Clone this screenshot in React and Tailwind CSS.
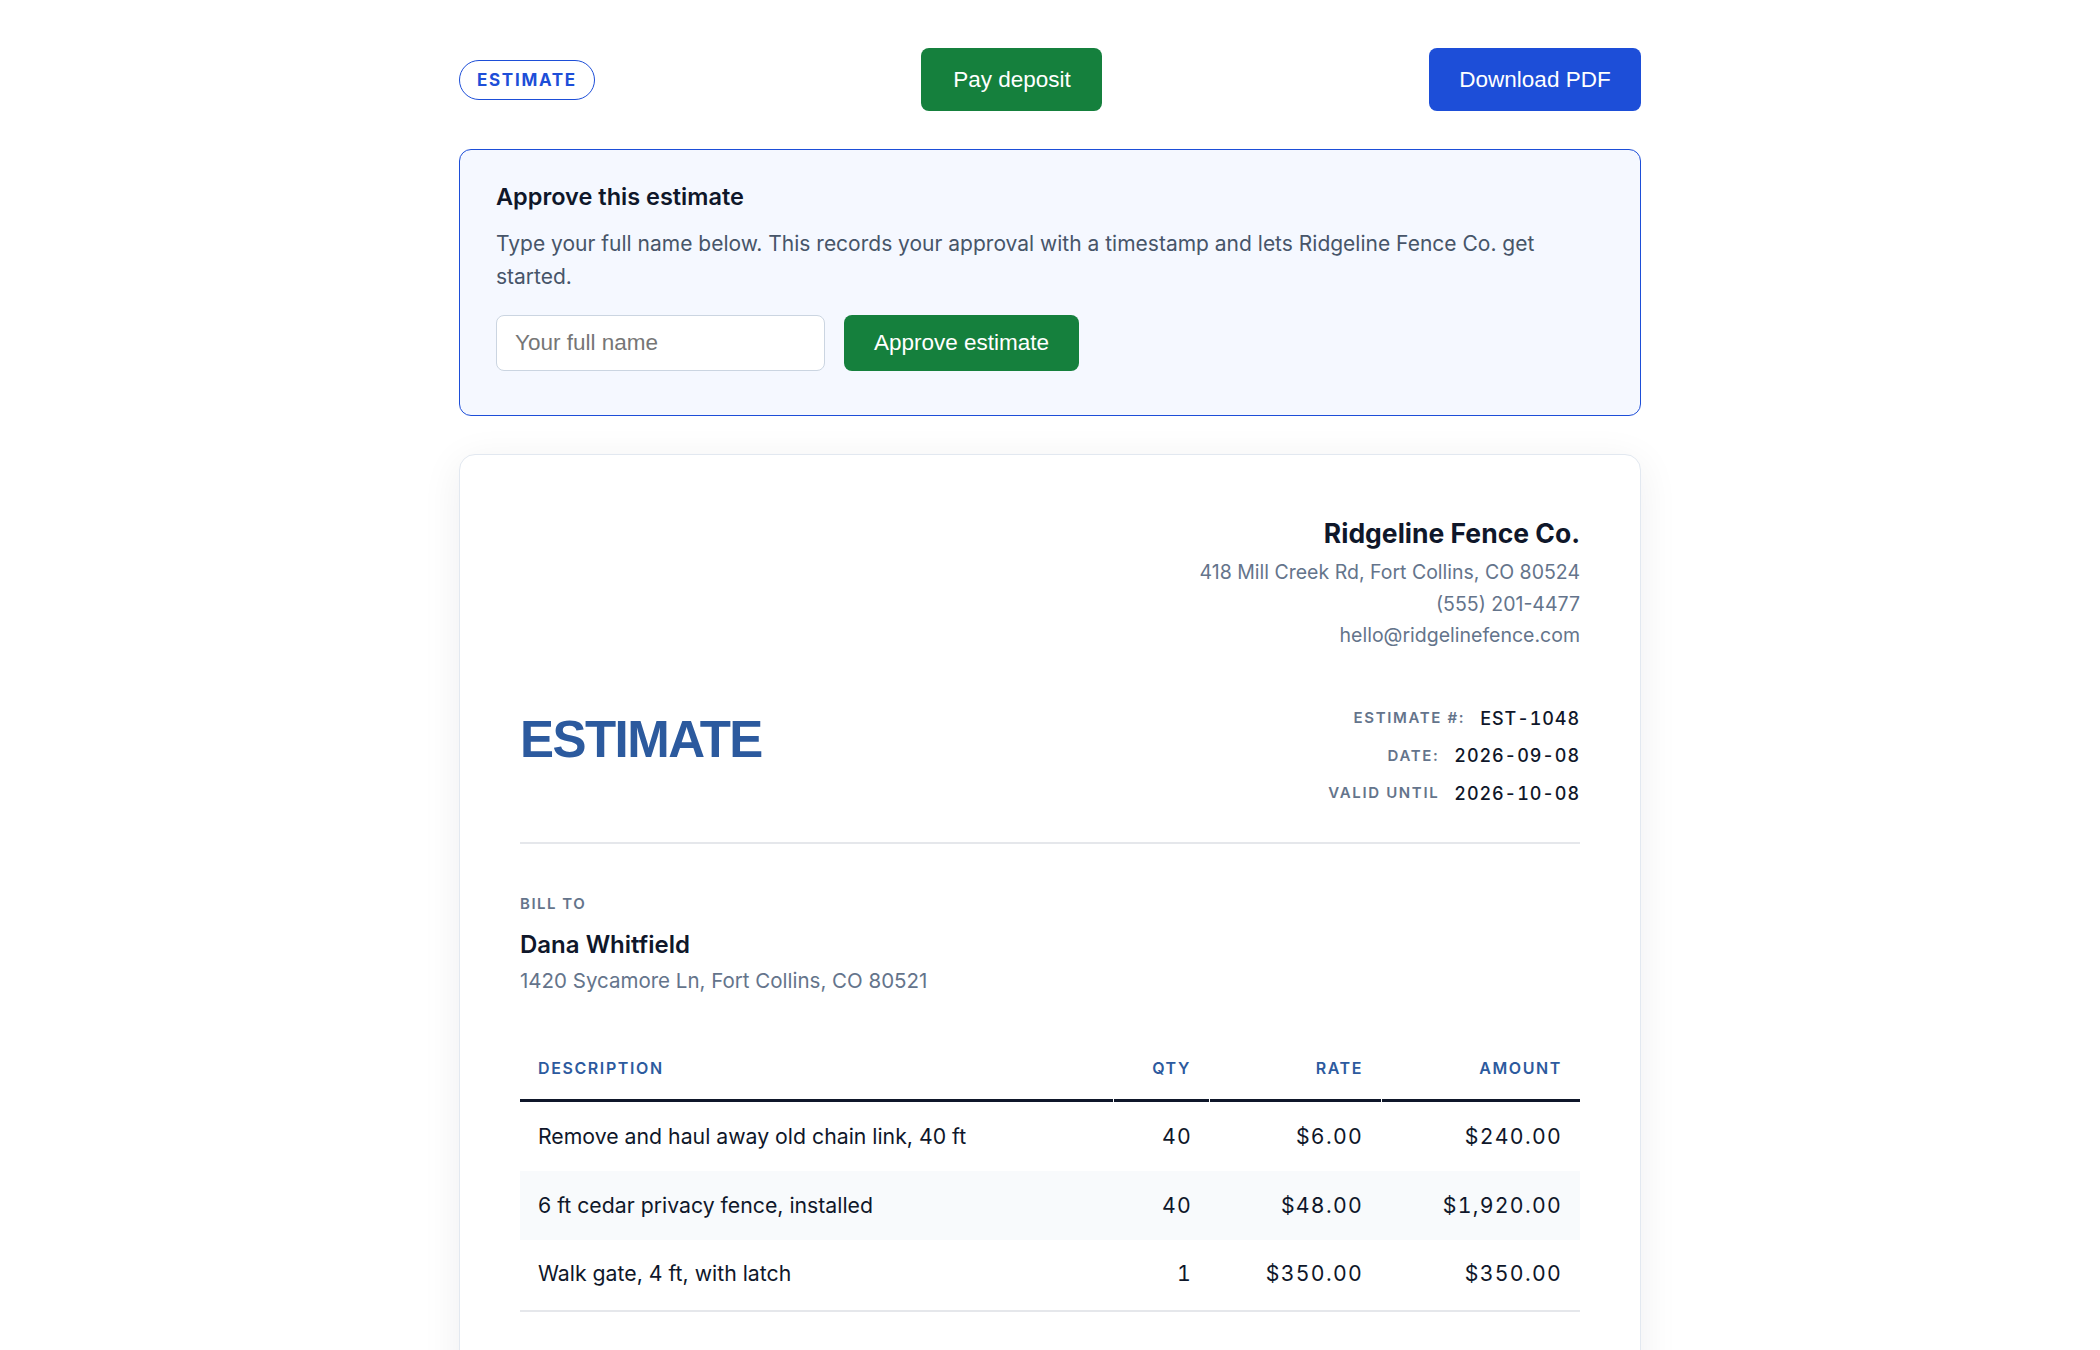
import React from "react";

const items = [
  { desc: "Remove and haul away old chain link, 40 ft", qty: "40", rate: "$6.00", amount: "$240.00" },
  { desc: "6 ft cedar privacy fence, installed", qty: "40", rate: "$48.00", amount: "$1,920.00" },
  { desc: "Walk gate, 4 ft, with latch", qty: "1", rate: "$350.00", amount: "$350.00" },
];

function MetaRow({ label, value }) {
  return (
    <div className="flex h-[37.5px] items-center justify-end gap-[15px]">
      <span className="text-[15px] font-semibold uppercase tracking-[0.11em] text-[#64748b]">{label}</span>
      <span className="text-[18px] font-medium tracking-[0.05em] text-[#0f172a] tabular-nums">{value}</span>
    </div>
  );
}

export default function App() {
  return (
    <div className="min-h-screen bg-white font-['Inter',sans-serif] text-[#0f172a]">
      <div className="mx-auto w-[1182px] pt-12 pb-20">
        {/* toolbar */}
        <div className="flex h-[63px] items-center justify-between">
          <span className="rounded-full border-[1.5px] border-[#1d4ed8] px-[17px] py-[8px] text-[17px] font-bold uppercase leading-[22px] tracking-[0.1em] text-[#1d4ed8]">
            Estimate
          </span>
          <button className="h-[63px] w-[181px] rounded-lg bg-[#15803d] font-['Liberation_Sans',Arial,sans-serif] text-[22.5px] text-white">
            Pay deposit
          </button>
          <button className="h-[63px] w-[212px] rounded-lg bg-[#1d4ed8] font-['Liberation_Sans',Arial,sans-serif] text-[22.5px] text-white">
            Download PDF
          </button>
        </div>

        {/* approval panel */}
        <section className="mt-[38px] rounded-xl border-[1.5px] border-[#1d4ed8] bg-[#f5f8ff] px-[36px] pt-[31px] pb-[44px]">
          <h2 className="text-[23.5px] font-semibold leading-[32px] text-[#0f172a]">Approve this estimate</h2>
          <p className="mt-[14px] text-[21px] leading-[33px] text-[#475569]">
            Type your full name below. This records your approval with a timestamp and lets Ridgeline Fence Co. get
            started.
          </p>
          <div className="mt-[22px] flex gap-[19px]">
            <input
              type="text"
              placeholder="Your full name"
              className="h-[56px] w-[329px] rounded-lg border border-[#cbd5e1] bg-white px-[18px] font-['Liberation_Sans',Arial,sans-serif] text-[22.5px] text-[#0f172a] placeholder:text-[#767676] outline-none"
            />
            <button className="h-[56px] w-[235px] rounded-lg bg-[#15803d] font-['Liberation_Sans',Arial,sans-serif] text-[22.5px] text-white">
              Approve estimate
            </button>
          </div>
        </section>

        {/* estimate document */}
        <article className="mt-[38px] rounded-2xl border border-[#e2e8f0] bg-white p-[60px] shadow-[0_8px_40px_rgba(15,23,42,0.07)]">
          <div className="flex flex-col items-end text-right">
            <h1 className="text-[26.5px] font-bold leading-[36px] text-[#0f172a]">Ridgeline Fence Co.</h1>
            <div className="mt-[6px] text-[19.5px] leading-[31.5px] text-[#64748b]">
              <div>418 Mill Creek Rd, Fort Collins, CO 80524</div>
              <div>(555) 201-4477</div>
              <div>hello@ridgelinefence.com</div>
            </div>
          </div>

          <div className="mt-[48px] flex items-start justify-between border-b-2 border-[#e5e7eb] pb-[30px]">
            <div className="mt-[10px] font-['Liberation_Sans',Arial,sans-serif] text-[51px] font-bold leading-[60px] tracking-[-0.03em] text-[#2c5a9e]">
              ESTIMATE
            </div>
            <div className="flex flex-col">
              <MetaRow label="Estimate #:" value="EST-1048" />
              <MetaRow label="Date:" value="2026-09-08" />
              <MetaRow label="Valid until" value="2026-10-08" />
            </div>
          </div>

          <div className="mt-[50px]">
            <div className="text-[15px] font-semibold uppercase leading-[20px] tracking-[0.1em] text-[#64748b]">Bill to</div>
            <div className="mt-[16px] text-[24px] font-semibold leading-[30px] text-[#0f172a]">Dana Whitfield</div>
            <div className="mt-[7px] text-[20.5px] leading-[28px] text-[#64748b]">1420 Sycamore Ln, Fort Collins, CO 80521</div>
          </div>

          {/* line items */}
          <div className="mt-[42px]">
            <div className="grid grid-cols-[593px_95px_171px_1fr] gap-x-px text-[16px] font-semibold uppercase tracking-[0.1em] text-[#2c5a9e]">
              <div className="flex h-[65px] items-center border-b-[3px] border-[#0f172a] px-[18px]">Description</div>
              <div className="flex h-[65px] items-center justify-end border-b-[3px] border-[#0f172a] px-[18px]">Qty</div>
              <div className="flex h-[65px] items-center justify-end border-b-[3px] border-[#0f172a] px-[18px]">Rate</div>
              <div className="flex h-[65px] items-center justify-end border-b-[3px] border-[#0f172a] px-[18px]">Amount</div>
            </div>
            {items.map((it, i) => (
              <div
                key={it.desc}
                className={
                  "grid grid-cols-[594px_96px_171px_1fr] items-center text-[21.25px] text-[#0f172a] " +
                  (i === 1 ? "h-[69px] bg-[#f8fafc] " : "") +
                  (i === 0 ? "h-[69px] " : "") +
                  (i === items.length - 1 ? "h-[72px] border-b-2 border-[#e5e7eb] pb-[3px]" : "")
                }
              >
                <div className="px-[18px]">{it.desc}</div>
                <div className="px-[18px] text-right tabular-nums tracking-[0.06em]">{it.qty}</div>
                <div className="px-[18px] text-right tabular-nums tracking-[0.06em]">{it.rate}</div>
                <div className="px-[18px] text-right tabular-nums tracking-[0.06em]">{it.amount}</div>
              </div>
            ))}
          </div>

          <div className="mt-[40px] flex justify-end">
            <div className="w-[380px] text-[19px]">
              <div className="flex justify-between py-[8px] text-[#64748b]">
                <span>Subtotal</span>
                <span className="tabular-nums tracking-[0.06em] text-[#0f172a]">$2,510.00</span>
              </div>
              <div className="flex justify-between border-t-[3px] border-[#0f172a] py-[12px] text-[22px] font-semibold">
                <span>Total</span>
                <span className="tabular-nums tracking-[0.06em]">$2,510.00</span>
              </div>
            </div>
          </div>
        </article>
      </div>
    </div>
  );
}
